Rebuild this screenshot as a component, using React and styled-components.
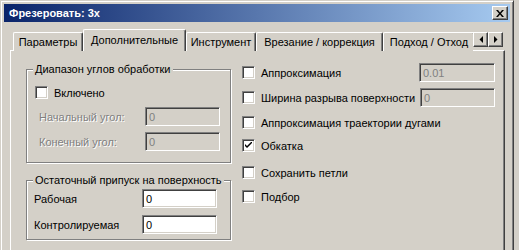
import React from 'react';
import styled, { createGlobalStyle } from 'styled-components';

const Global = createGlobalStyle`
  html, body { margin: 0; padding: 0; background: #d4d0c8; overflow: hidden; }
  body { font-family: "Liberation Sans", Arial, sans-serif; font-size: 11px; color: #000; }
  * { box-sizing: border-box; }
`;

const Window = styled.div`
  width: 514px;
  height: 270px;
  background: #d4d0c8;
  border: 1px solid;
  border-color: #d4d0c8 #404040 #404040 #d4d0c8;
  box-shadow: inset 1px 1px #fff, inset -1px -1px #808080;
  padding: 3px;
  display: flex;
  flex-direction: column;
`;

const TitleBar = styled.div`
  height: 18px;
  flex: none;
  display: flex;
  align-items: center;
  justify-content: space-between;
  padding: 0 2px 0 5px;
  background: linear-gradient(to right, #0a246a, #a6caf0);
`;

const TitleText = styled.span`
  color: #fff;
  font-weight: bold;
  font-size: 11px;
  white-space: nowrap;
`;

const RaisedButton = styled.div`
  width: ${p => p.$w}px;
  height: ${p => p.$h}px;
  flex: none;
  display: flex;
  align-items: center;
  justify-content: center;
  background: #d4d0c8;
  border: 1px solid;
  border-color: #fff #404040 #404040 #fff;
  box-shadow: inset -1px -1px #808080;
`;

const Body = styled.div`
  flex: 1;
  display: flex;
  flex-direction: column;
  padding: 7px 5px 0 6px;
`;

const TabStrip = styled.div`
  height: 21px;
  flex: none;
  display: flex;
  align-items: flex-end;
  position: relative;
  z-index: 2;
`;

const TabsTrack = styled.div`
  flex: 1;
  display: flex;
  align-items: flex-end;
  height: 22px;
  align-self: flex-start;
  overflow: hidden;
  padding-left: 3px;
`;

const Tab = styled.div`
  width: ${p => p.$w}px;
  height: ${p => (p.$active ? 22 : 19)}px;
  flex: none;
  display: flex;
  align-items: center;
  justify-content: center;
  padding-bottom: ${p => (p.$active ? 2 : 0)}px;
  background: #d4d0c8;
  border-top: 1px solid #fff;
  border-left: 1px solid #fff;
  border-right: 1px solid #404040;
  box-shadow: inset -1px 0 #808080;
  border-top-left-radius: 2px;
  border-top-right-radius: 2px;
  white-space: nowrap;
  position: relative;
  z-index: ${p => (p.$active ? 2 : 1)};
`;

const ArrowGroup = styled.div`
  display: flex;
  margin: 0 2px 3px 0;
  flex: none;
`;

const Panel = styled.div`
  flex: 1;
  display: flex;
  gap: 11px;
  border: 1px solid;
  border-color: #fff #404040 #404040 #fff;
  box-shadow: inset -1px -1px #808080;
  padding: 18px 0 0 15px;
  position: relative;
  z-index: 1;
`;

const LeftCol = styled.div`
  width: 205px;
  display: flex;
  flex-direction: column;
  gap: 17px;
`;

const GroupBox = styled.div`
  position: relative;
  height: ${p => p.$h}px;
  border: 1px solid #808080;
  box-shadow: inset 1px 1px #fff, 1px 1px #fff;
  padding: ${p => p.$pad};
  display: flex;
  flex-direction: column;
`;

const GroupLabel = styled.span`
  position: absolute;
  top: -8px;
  left: 6px;
  padding: 0 2px 0 2px;
  background: #d4d0c8;
  line-height: 14px;
  white-space: nowrap;
`;

const FieldRow = styled.div`
  display: flex;
  align-items: center;
  justify-content: space-between;
  height: 19px;
  margin-top: ${p => p.$mt || 0}px;
  padding-left: ${p => p.$pl || 0}px;
`;

const Label = styled.span`
  white-space: nowrap;
  color: ${p => (p.$disabled ? '#808080' : '#000')};
  text-shadow: ${p => (p.$disabled ? '1px 1px 0 #fff' : 'none')};
`;

const Edit = styled.div`
  width: ${p => p.$w || 75}px;
  height: 19px;
  flex: none;
  display: flex;
  align-items: center;
  padding: 0 3px;
  background: ${p => (p.$disabled ? '#d4d0c8' : '#fff')};
  color: ${p => (p.$disabled ? '#808080' : '#000')};
  border: 1px solid;
  border-color: #808080 #fff #fff #808080;
  box-shadow: inset 1px 1px #404040, inset -1px -1px #d4d0c8;
`;

const CheckLine = styled.div`
  display: flex;
  align-items: center;
  gap: 6px;
  height: 19px;
  margin-top: ${p => p.$mt || 0}px;
`;

const Box = styled.div`
  width: 13px;
  height: 13px;
  flex: none;
  display: flex;
  align-items: center;
  justify-content: center;
  background: #fff;
  border: 1px solid;
  border-color: #808080 #fff #fff #808080;
  box-shadow: inset 1px 1px #404040, inset -1px -1px #d4d0c8;
`;

const RightCol = styled.div`
  width: 253px;
  display: flex;
  flex-direction: column;
  padding-top: 12px;
  margin-top: -18px;
`;

const RightRow = styled.div`
  display: flex;
  align-items: center;
  justify-content: space-between;
  height: 19px;
  margin-top: ${p => p.$mt || 0}px;
`;

const Check = ({ checked }) => (
  <Box>
    {checked && (
      <svg width="7" height="7" viewBox="0 0 7 7">
        <path d="M0 2 L2 4 L7 -1 L7 1 L2 6 L0 4 Z" fill="#000" />
      </svg>
    )}
  </Box>
);

const CheckItem = ({ label, checked }) => (
  <CheckLine>
    <Check checked={checked} />
    <Label>{label}</Label>
  </CheckLine>
);

const tabs = [
  { t: 'Параметры', w: 70 },
  { t: 'Дополнительные', w: 103, active: true },
  { t: 'Инструмент', w: 70 },
  { t: 'Врезание / коррекция', w: 127 },
  { t: 'Подход / Отход', w: 92 },
];

export default function App() {
  return (
    <>
      <Global />
      <Window>
        <TitleBar>
          <TitleText>Фрезеровать: 3х</TitleText>
          <RaisedButton $w={16} $h={14}>
            <svg width="8" height="7" viewBox="0 0 8 7">
              <path d="M0 0h2l2 2.5 2-2.5h2l-3 3.5 3 3.5h-2l-2-2.5-2 2.5h-2l3-3.5z" fill="#000" />
            </svg>
          </RaisedButton>
        </TitleBar>
        <Body>
          <TabStrip>
            <TabsTrack>
              {tabs.map(tb => (
                <Tab key={tb.t} $w={tb.w} $active={tb.active}>{tb.t}</Tab>
              ))}
            </TabsTrack>
            <ArrowGroup>
              <RaisedButton $w={15} $h={15}>
                <svg width="4" height="7" viewBox="0 0 4 7"><path d="M4 0 V7 L0.5 3.5 Z" fill="#000" /></svg>
              </RaisedButton>
              <RaisedButton $w={15} $h={15}>
                <svg width="4" height="7" viewBox="0 0 4 7"><path d="M0 0 V7 L3.5 3.5 Z" fill="#000" /></svg>
              </RaisedButton>
            </ArrowGroup>
          </TabStrip>
          <Panel>
            <LeftCol>
              <GroupBox $h={94} $pad="13px 10px 0 8px">
                <GroupLabel>Диапазон углов обработки</GroupLabel>
                <CheckItem label="Включено" />
                <FieldRow $mt={5} $pl={4}>
                  <Label $disabled>Начальный угол:</Label>
                  <Edit $disabled>0</Edit>
                </FieldRow>
                <FieldRow $mt={6} $pl={4}>
                  <Label $disabled>Конечный угол:</Label>
                  <Edit $disabled>0</Edit>
                </FieldRow>
              </GroupBox>
              <GroupBox $h={60} $pad="8px 13px 0 7px">
                <GroupLabel>Остаточный припуск на поверхность</GroupLabel>
                <FieldRow>
                  <Label>Рабочая</Label>
                  <Edit>0</Edit>
                </FieldRow>
                <FieldRow $mt={7}>
                  <Label>Контролируемая</Label>
                  <Edit>0</Edit>
                </FieldRow>
              </GroupBox>
            </LeftCol>
            <RightCol>
              <RightRow>
                <CheckItem label="Аппроксимация" />
                <Edit $disabled $w={76}>0.01</Edit>
              </RightRow>
              <RightRow $mt={6}>
                <CheckItem label="Ширина разрыва поверхности" />
                <Edit $disabled>0</Edit>
              </RightRow>
              <RightRow $mt={6}>
                <CheckItem label="Аппроксимация траектории дугами" />
              </RightRow>
              <RightRow $mt={4}>
                <CheckItem label="Обкатка" checked />
              </RightRow>
              <RightRow $mt={8}>
                <CheckItem label="Сохранить петли" />
              </RightRow>
              <RightRow $mt={5}>
                <CheckItem label="Подбор" />
              </RightRow>
            </RightCol>
          </Panel>
        </Body>
      </Window>
    </>
  );
}
